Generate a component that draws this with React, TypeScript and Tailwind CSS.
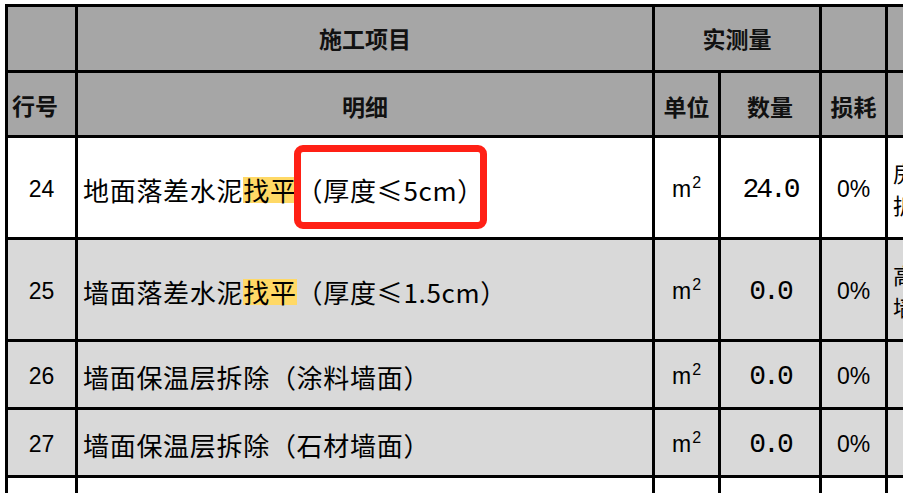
import React from "react";

const cjk = "font-['Noto_Sans_CJK_SC',sans-serif]";
const num = "font-['Liberation_Sans',sans-serif]";

function Hl({ children }: { children: React.ReactNode }) {
  return <span className="inline-block bg-[#ffd966] leading-none">{children}</span>;
}

function Unit() {
  return (
    <span className={`${num} text-[23px] text-black leading-none`}>
      m<sup className="text-[16px] relative -top-[9px] ml-[1px]">2</sup>
    </span>
  );
}

type Row = {
  no: string;
  desc: React.ReactNode;
  qty: string;
  bg: string;
  extra: [string, string] | null;
};

const rows: Row[] = [
  {
    no: "24",
    desc: (
      <>
        地面落差水泥<Hl>找平</Hl>（厚度≤5cm）
      </>
    ),
    qty: "24.0",
    bg: "bg-white",
    extra: ["房间", "拆除"],
  },
  {
    no: "25",
    desc: (
      <>
        墙面落差水泥<Hl>找平</Hl>（厚度≤1.5cm）
      </>
    ),
    qty: "0.0",
    bg: "bg-[#d9d9d9]",
    extra: ["高度", "墙面"],
  },
  {
    no: "26",
    desc: <>墙面保温层拆除（涂料墙面）</>,
    qty: "0.0",
    bg: "bg-[#d9d9d9]",
    extra: null,
  },
  {
    no: "27",
    desc: <>墙面保温层拆除（石材墙面）</>,
    qty: "0.0",
    bg: "bg-[#d9d9d9]",
    extra: null,
  },
];

export default function App() {
  const head = `bg-[#a6a6a6] flex items-center justify-center ${cjk} font-bold text-[23px] text-[#111]`;
  return (
    <div className="relative w-[903px] h-[493px] overflow-hidden bg-white">
      <div className="pl-[5px] pt-[4px]">
        <div className="grid w-max bg-black p-[3px] gap-[3px] grid-cols-[67px_574px_63px_98px_63px_120px] grid-rows-[63px_62px_99px_99px_65px_65px_40px]">
          {/* header row 1 */}
          <div className={head}></div>
          <div className={head}>施工项目</div>
          <div className={`${head} col-span-2`}>实测量</div>
          <div className={head}></div>
          <div className={head}></div>
          {/* header row 2 */}
          <div className={`${head} justify-start pl-[4px] pt-[2px]`}>行号</div>
          <div className={`${head} pt-[4px]`}>明细</div>
          <div className={`${head} pt-[4px]`}>单位</div>
          <div className={`${head} pt-[4px]`}>数量</div>
          <div className={`${head} pt-[4px]`}>损耗</div>
          <div className={head}></div>

          {rows.map((r) => (
            <React.Fragment key={r.no}>
              <div className={`${r.bg} flex items-center justify-center pt-[4px] ${num} text-[23px] text-black`}>
                {r.no}
              </div>
              <div
                className={`${r.bg} flex items-center pl-[5px] pt-[4px] ${cjk} text-[26px] tracking-[0.7px] text-black whitespace-nowrap`}
              >
                <span className="leading-none">{r.desc}</span>
              </div>
              <div className={`${r.bg} flex items-center justify-center pt-[4px]`}>
                <Unit />
              </div>
              <div
                className={`${r.bg} flex items-center justify-center pt-[4px] font-['Liberation_Mono',monospace] text-[28px] tracking-[-3px] text-black`}
              >
                {r.qty}
              </div>
              <div className={`${r.bg} flex items-center justify-center pt-[4px] ${num} text-[23px] text-black`}>
                0%
              </div>
              <div className={`${r.bg} flex flex-col justify-center pl-[5px] ${cjk} text-[22px] leading-[32px] text-black whitespace-nowrap`}>
                {r.extra ? (
                  <>
                    <span>{r.extra[0]}</span>
                    <span>{r.extra[1]}</span>
                  </>
                ) : null}
              </div>
            </React.Fragment>
          ))}

          {/* trailing white row */}
          <div className="bg-white"></div>
          <div className="bg-white"></div>
          <div className="bg-white"></div>
          <div className="bg-white"></div>
          <div className="bg-white"></div>
          <div className="bg-white"></div>
        </div>
      </div>

      {/* red annotation box */}
      <div className="absolute left-[294px] top-[145px] w-[193px] h-[84px] border-[7px] border-[#ff2015] rounded-[9px]"></div>
    </div>
  );
}
